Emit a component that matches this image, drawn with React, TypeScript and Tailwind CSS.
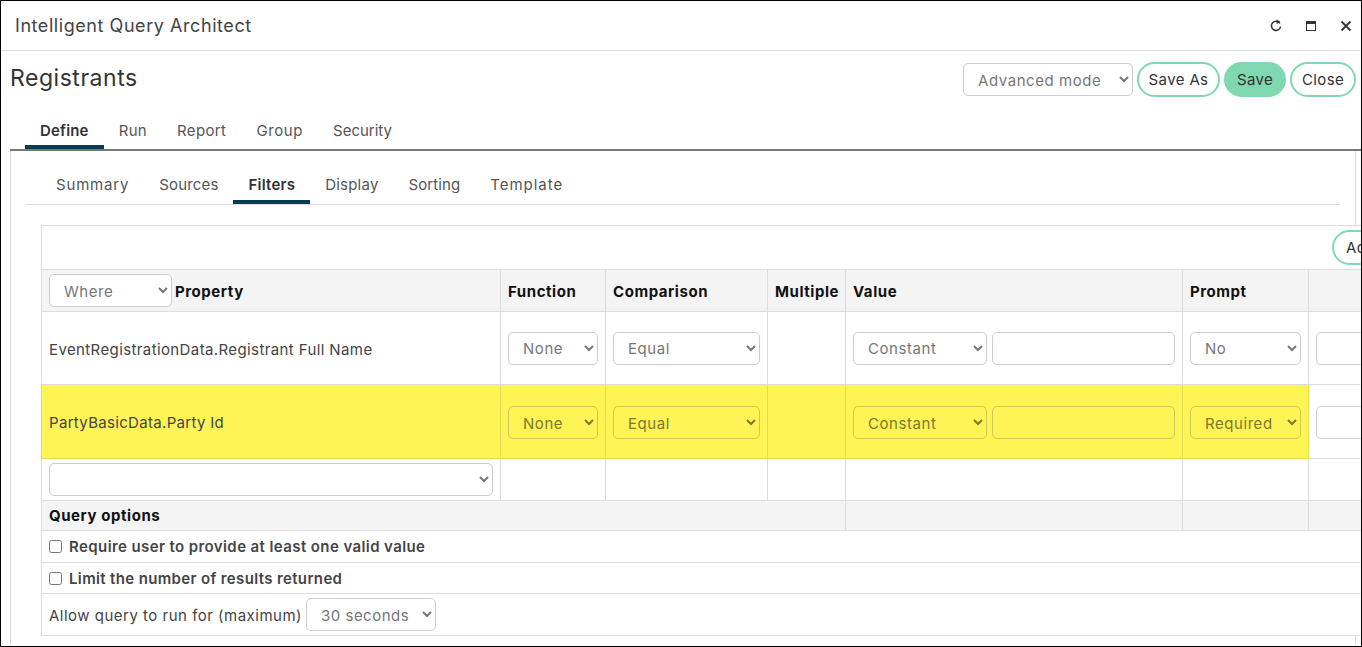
import React from "react";

const selectCls =
  "h-[33px] rounded-[5px] border border-[#ccc] bg-white pl-[10px] pr-[4px] pt-[1px] text-[15px] font-normal text-[#777] align-middle";
const ySelectCls =
  "h-[33px] rounded-[5px] border border-[#cfc84e] bg-[#fff455] pl-[10px] pr-[4px] pt-[1px] text-[15px] font-normal text-[#7c7830] align-middle";
const th = "border border-[#ddd] px-[7px] text-left text-[15px] font-bold text-[#111] bg-[#f4f4f4]";
const td = "border border-[#ddd] px-[7px] text-[15px] text-[#444]";
const ytd = "border border-[#e4dc50] px-[7px] pt-[2px] text-[15px] text-[#444] bg-[#fff455]";

function Sel({ w, v, y }: { w: string; v: string; y?: boolean }) {
  return (
    <select className={`${y ? ySelectCls : selectCls} ${w}`} defaultValue={v}>
      <option>{v}</option>
    </select>
  );
}

function Btn({ children, solid, cls }: { children: React.ReactNode; solid?: boolean; cls: string }) {
  return (
    <button
      className={`h-[35px] shrink-0 rounded-full border-2 border-[#7fd8b0] pt-[1px] text-[15px] tracking-[0.025em] text-[#333] ${
        solid ? "bg-[#7fd8b0]" : "bg-white"
      } ${cls}`}
    >
      {children}
    </button>
  );
}

const mainTabs = [
  { t: "Define", c: "border-[#003f52] font-semibold tracking-[0.012em] text-[#333]" },
  { t: "Run", c: "border-transparent tracking-[0.02em] text-[#555]" },
  { t: "Report", c: "border-transparent tracking-[0.025em] text-[#555]" },
  { t: "Group", c: "border-transparent tracking-[0.04em] text-[#555]" },
  { t: "Security", c: "border-transparent tracking-[0] text-[#555]" },
];

const subTabs = [
  { t: "Summary", c: "border-transparent tracking-[0.055em] text-[#555]" },
  { t: "Sources", c: "border-transparent tracking-[0.01em] text-[#555]" },
  { t: "Filters", c: "border-[#003f52] font-semibold tracking-[0.015em] text-[#333]" },
  { t: "Display", c: "border-transparent tracking-[0.015em] text-[#555]" },
  { t: "Sorting", c: "border-transparent tracking-[0.005em] text-[#555]" },
  { t: "Template", c: "border-transparent tracking-[0.065em] text-[#555]" },
];

export default function App() {
  return (
    <div className="h-[647px] w-[1362px] overflow-hidden border border-black bg-white font-['Inter',sans-serif] tracking-[0.035em] text-[#333]">
      <div className="flex h-[50px] items-center justify-between border-b border-[#ddd] pl-[14px] pr-[8px]">
        <span className="text-[18px] text-[#444]">Intelligent Query Architect</span>
        <div className="flex items-center gap-[21px] text-[#333]">
          <svg width="14" height="14" viewBox="0 0 14 14" fill="none" stroke="currentColor" strokeWidth="1.5">
            <path d="M10.9 4.3A4.6 4.6 0 1 0 11.6 7.5" />
            <path d="M7.6 0.6 L11.4 2.8 L7.6 5 Z" fill="currentColor" stroke="none" />
          </svg>
          <svg width="14" height="14" viewBox="0 0 14 14" fill="none" stroke="currentColor">
            <rect x="2.5" y="2.5" width="9" height="9" strokeWidth="1" />
            <rect x="2" y="2" width="10" height="3" fill="currentColor" stroke="none" />
          </svg>
          <svg width="14" height="14" viewBox="0 0 14 14" fill="none" stroke="currentColor" strokeWidth="1.8">
            <path d="M2.5 2.5 L11.5 11.5 M11.5 2.5 L2.5 11.5" />
          </svg>
        </div>
      </div>

      <div className="pl-[9px]">
        <div className="flex h-[66px] items-start justify-between pr-[5px] pt-[11px]">
          <h1 className="text-[23px] leading-[32px] tracking-[0.023em] text-[#333]">Registrants</h1>
          <div className="flex items-center gap-[4px]">
            <Sel w="w-[170px]" v="Advanced mode" />
            <Btn cls="w-[83px]">Save As</Btn>
            <Btn solid cls="w-[62px]">Save</Btn>
            <Btn cls="w-[66px]">Close</Btn>
          </div>
        </div>

        <div className="flex h-[34px] border-b-2 border-[#777] pl-[15px] text-[15px]">
          {mainTabs.map(({ t, c }) => (
            <div key={t} className={`flex h-[32px] items-center border-b-4 px-[15px] ${c}`}>
              {t}
            </div>
          ))}
        </div>

        <div className="mr-[5px] h-[495px] border-x border-[#ddd] pl-[15px]">
          <div className="mr-[15px] flex h-[54px] items-end border-b border-[#ddd] pl-[15px] text-[15px]">
            {subTabs.map(({ t, c }) => (
              <div key={t} className={`flex h-[36px] items-center border-b-4 px-[15px] pt-[2px] ${c}`}>
                {t}
              </div>
            ))}
          </div>

          <div className="ml-[15px] mt-[20px] w-[1360px] bg-white">
            <table className="w-[1357px] table-fixed border-collapse">
              <colgroup>
                <col className="w-[459px]" />
                <col className="w-[105px]" />
                <col className="w-[162px]" />
                <col className="w-[78px]" />
                <col className="w-[337px]" />
                <col className="w-[126px]" />
                <col />
              </colgroup>
              <tbody>
                <tr className="h-[44px]">
                  <td colSpan={7} className="border border-[#ddd] pr-[5px] text-right">
                    <Btn cls="w-[60px] pl-[12px] text-left">Add</Btn>
                  </td>
                </tr>
                <tr className="h-[42px]">
                  <th className={th}>
                    <div className="flex items-center gap-[3px]">
                      <Sel w="w-[123px]" v="Where" />
                      <span className="pt-[3px]">Property</span>
                    </div>
                  </th>
                  <th className={`${th} pt-[3px]`}>Function</th>
                  <th className={`${th} pt-[3px]`}>Comparison</th>
                  <th className={`${th} pt-[3px]`}>Multiple</th>
                  <th className={`${th} pt-[3px]`}>Value</th>
                  <th className={`${th} pt-[3px]`}>Prompt</th>
                  <th className={th}></th>
                </tr>
                <tr className="h-[73px]">
                  <td className={`${td} pt-[4px] tracking-[0.026em]`}>EventRegistrationData.Registrant Full Name</td>
                  <td className={td}><Sel w="w-[90px]" v="None" /></td>
                  <td className={td}><Sel w="w-[147px]" v="Equal" /></td>
                  <td className={td}></td>
                  <td className={td}>
                    <div className="flex gap-[5px]">
                      <Sel w="w-[134px]" v="Constant" />
                      <input className="h-[33px] w-[183px] rounded-[5px] border border-[#ccc] bg-white" />
                    </div>
                  </td>
                  <td className={td}><Sel w="w-[111px]" v="No" /></td>
                  <td className={td}>
                    <input className="h-[33px] w-[70px] rounded-[5px] border border-[#ccc] bg-white" />
                  </td>
                </tr>
                <tr className="h-[74px]">
                  <td className={`${ytd} pt-[4px] tracking-[0.021em]`}>PartyBasicData.Party Id</td>
                  <td className={ytd}><Sel y w="w-[90px]" v="None" /></td>
                  <td className={ytd}><Sel y w="w-[147px]" v="Equal" /></td>
                  <td className={ytd}></td>
                  <td className={ytd}>
                    <div className="flex gap-[5px]">
                      <Sel y w="w-[134px]" v="Constant" />
                      <input className="h-[33px] w-[183px] rounded-[5px] border border-[#cfc84e] bg-[#fff455]" />
                    </div>
                  </td>
                  <td className={ytd}><Sel y w="w-[111px]" v="Required" /></td>
                  <td className={`${td} pt-[2px]`}>
                    <input className="h-[33px] w-[70px] rounded-[5px] border border-[#ccc] bg-white" />
                  </td>
                </tr>
                <tr className="h-[42px]">
                  <td className={td}><Sel w="w-[444px]" v="" /></td>
                  <td className={td}></td>
                  <td className={td}></td>
                  <td className={td}></td>
                  <td className={td}></td>
                  <td className={td}></td>
                  <td className={td}></td>
                </tr>
                <tr className="h-[30px]">
                  <th colSpan={4} className={`${th} pt-[2px]`}>Query options</th>
                  <th className={th}></th>
                  <th className={th}></th>
                  <th className={th}></th>
                </tr>
                <tr className="h-[32px]">
                  <td colSpan={7} className={td}>
                    <label className="flex items-center gap-[7px] font-semibold tracking-[0.027em] text-[#444]">
                      <input type="checkbox" className="m-0 h-[13px] w-[13px]" />
                      <span className="pt-[1px]">Require user to provide at least one valid value</span>
                    </label>
                  </td>
                </tr>
                <tr className="h-[31px]">
                  <td colSpan={7} className={`${td} pt-[1px]`}>
                    <label className="flex items-center gap-[7px] font-semibold tracking-[0.024em] text-[#444]">
                      <input type="checkbox" className="m-0 h-[13px] w-[13px]" />
                      <span className="pt-[1px]">Limit the number of results returned</span>
                    </label>
                  </td>
                </tr>
                <tr className="h-[42px]">
                  <td colSpan={7} className={td}>
                    <div className="flex items-center gap-[4px] tracking-[0.033em]">
                      <span className="pt-[4px]">Allow query to run for (maximum)</span>
                      <Sel w="w-[130px]" v="30 seconds" />
                    </div>
                  </td>
                </tr>
              </tbody>
            </table>
          </div>
        </div>
      </div>
    </div>
  );
}
